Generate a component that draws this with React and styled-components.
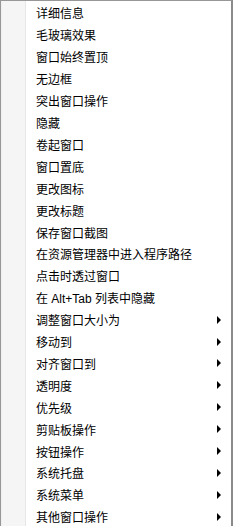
import React from "react";
import styled, { createGlobalStyle } from "styled-components";

const items = [
  { label: "详细信息" },
  { label: "毛玻璃效果" },
  { label: "窗口始终置顶" },
  { label: "无边框" },
  { label: "突出窗口操作" },
  { label: "隐藏" },
  { label: "卷起窗口" },
  { label: "窗口置底" },
  { label: "更改图标" },
  { label: "更改标题" },
  { label: "保存窗口截图" },
  { label: "在资源管理器中进入程序路径" },
  { label: "点击时透过窗口" },
  { label: "在 Alt+Tab 列表中隐藏" },
  { label: "调整窗口大小为", sub: true },
  { label: "移动到", sub: true },
  { label: "对齐窗口到", sub: true },
  { label: "透明度", sub: true },
  { label: "优先级", sub: true },
  { label: "剪贴板操作", sub: true },
  { label: "按钮操作", sub: true },
  { label: "系统托盘", sub: true },
  { label: "系统菜单", sub: true },
  { label: "其他窗口操作", sub: true },
];

const GlobalStyle = createGlobalStyle`
  html, body {
    margin: 0;
    padding: 0;
    background: #fff;
  }
`;

const Menu = styled.div`
  box-sizing: border-box;
  width: 233px;
  height: 526px;
  overflow: hidden;
  border-top: 1px solid #979797;
  border-left: 1px solid #979797;
  border-right: 2px solid #8a8a8a;
  padding-top: 1px;
  background: linear-gradient(
    to right,
    #f0f0f0 0 1px,
    #f5f5f5 1px 24px,
    #e6e6e6 24px 25px,
    #ffffff 25px
  );
  font-family: "Liberation Sans", "Noto Sans CJK SC", sans-serif;
  font-size: 12px;
  color: #000;
`;

const Row = styled.div`
  height: 21.92px;
  display: flex;
  align-items: center;
  justify-content: space-between;
  padding-left: 35px;
  padding-right: 10px;
  white-space: nowrap;
`;

const Arrow = styled.span`
  width: 0;
  height: 0;
  border-left: 4px solid #000;
  border-top: 4px solid transparent;
  border-bottom: 4px solid transparent;
`;

export default function App() {
  return (
    <>
      <GlobalStyle />
      <Menu>
        {items.map((it) => (
          <Row key={it.label}>
            <span>{it.label}</span>
            {it.sub && <Arrow />}
          </Row>
        ))}
      </Menu>
    </>
  );
}
